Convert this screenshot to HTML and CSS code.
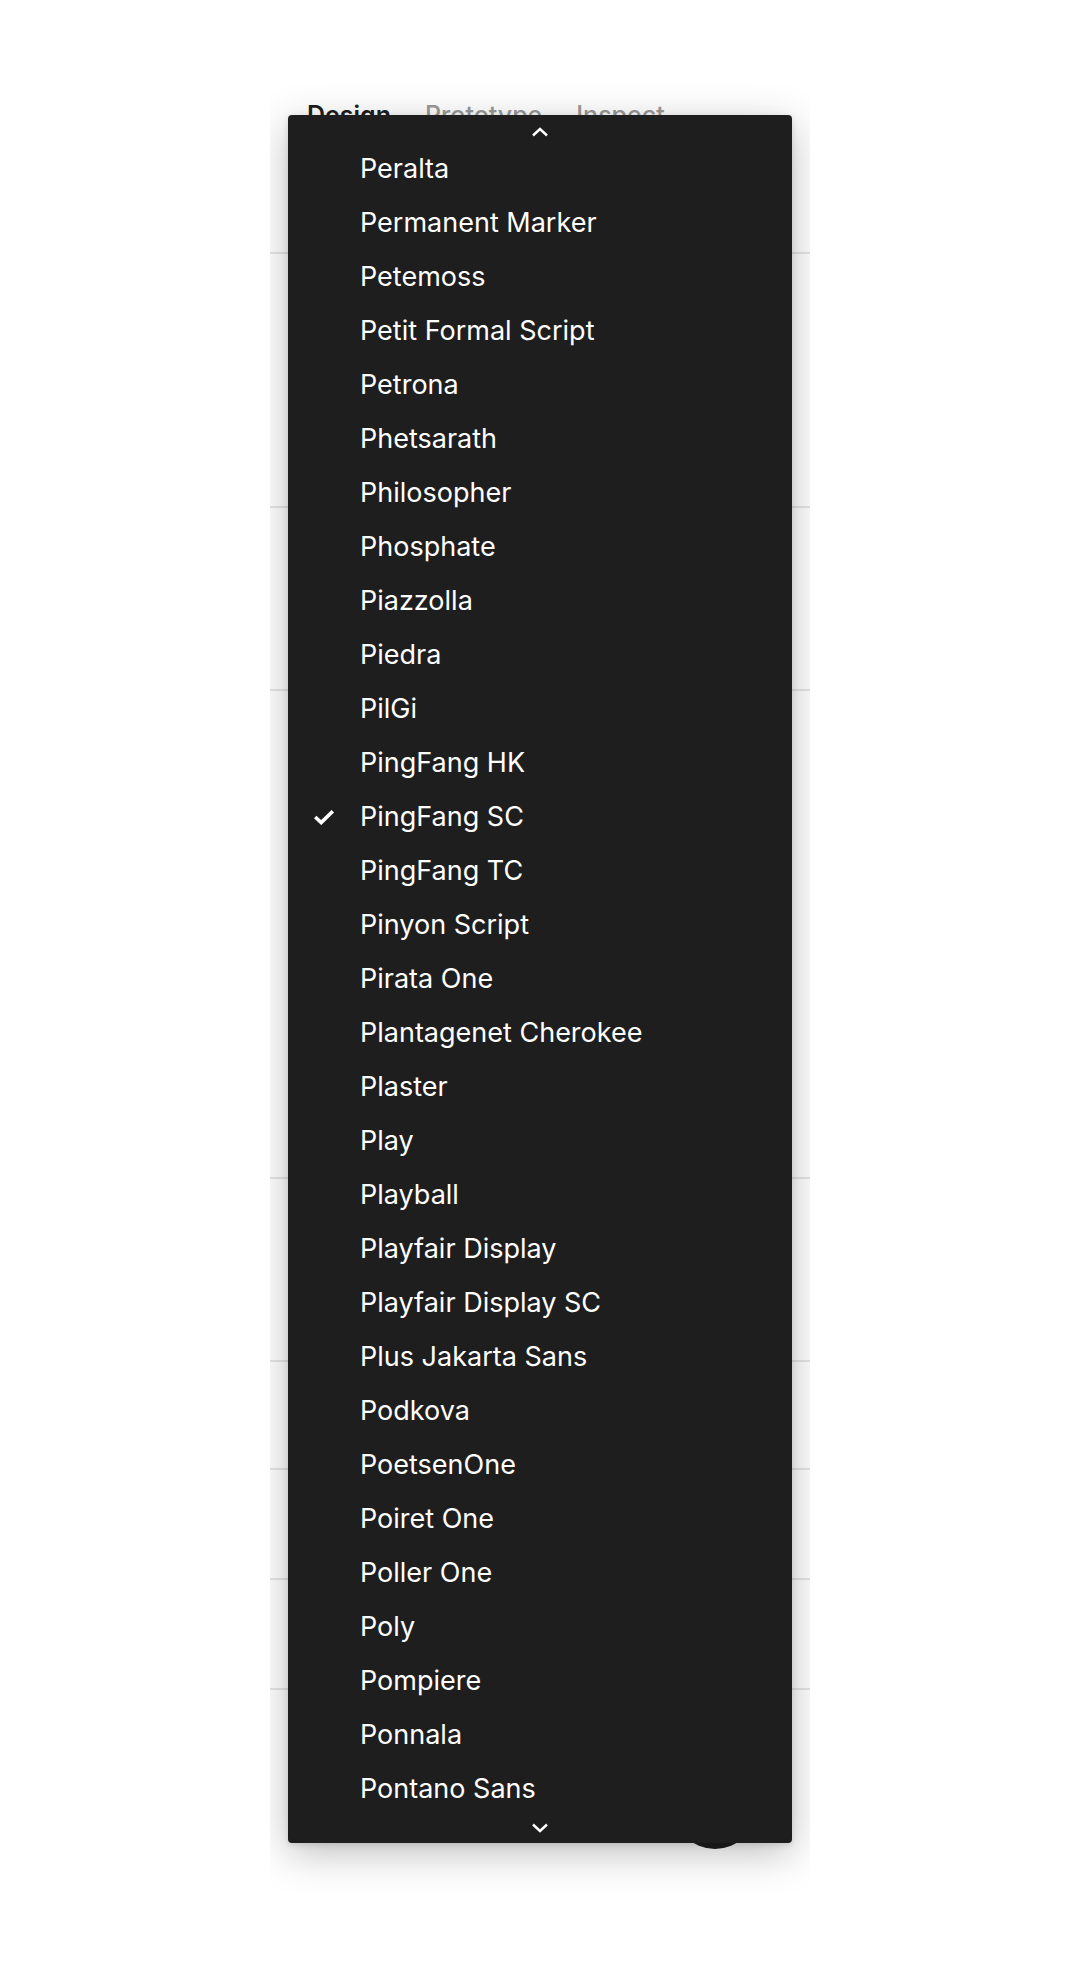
FILE: index.html
```html
<!DOCTYPE html>
<html lang="en">
<head>
<meta charset="utf-8">
<title>Font picker</title>
<link rel="stylesheet" href="styles.css">
</head>
<body>
<div class="panel">
  <div class="section section-tabs">
    <div class="tabs">
      <span class="tab tab-active">Design</span>
      <span class="tab">Prototype</span>
      <span class="tab">Inspect</span>
    </div>
  </div>
  <div class="section section-a"></div>
  <div class="section section-b"></div>
  <div class="section section-c"></div>
  <div class="section section-d"></div>
  <div class="section section-e1"></div>
  <div class="section section-e"></div>
  <div class="section section-e"></div>
  <div class="section section-last"></div>

  <div class="fab"></div>

  <div class="dropdown">
    <div class="scroll-arrow scroll-up">
      <svg width="18" height="10" viewBox="0 0 18 10"><polyline points="2,8.5 9,2 16,8.5" fill="none" stroke="#fff" stroke-width="2.4" stroke-linejoin="miter"/></svg>
    </div>
    <ul class="font-list">
      <li class="font-item"><span class="mark"></span><span class="name">Peralta</span></li>
      <li class="font-item"><span class="mark"></span><span class="name">Permanent Marker</span></li>
      <li class="font-item"><span class="mark"></span><span class="name">Petemoss</span></li>
      <li class="font-item"><span class="mark"></span><span class="name">Petit Formal Script</span></li>
      <li class="font-item"><span class="mark"></span><span class="name">Petrona</span></li>
      <li class="font-item"><span class="mark"></span><span class="name">Phetsarath</span></li>
      <li class="font-item"><span class="mark"></span><span class="name">Philosopher</span></li>
      <li class="font-item"><span class="mark"></span><span class="name">Phosphate</span></li>
      <li class="font-item"><span class="mark"></span><span class="name">Piazzolla</span></li>
      <li class="font-item"><span class="mark"></span><span class="name">Piedra</span></li>
      <li class="font-item"><span class="mark"></span><span class="name">PilGi</span></li>
      <li class="font-item"><span class="mark"></span><span class="name">PingFang HK</span></li>
      <li class="font-item font-item-selected"><span class="mark"><svg width="22" height="16" viewBox="0 0 22 16"><polyline points="2.2,8 8.2,13.6 19.8,2.2" fill="none" stroke="#fff" stroke-width="3.6" stroke-linejoin="miter" stroke-linecap="butt"/></svg></span><span class="name">PingFang SC</span></li>
      <li class="font-item"><span class="mark"></span><span class="name">PingFang TC</span></li>
      <li class="font-item"><span class="mark"></span><span class="name">Pinyon Script</span></li>
      <li class="font-item"><span class="mark"></span><span class="name">Pirata One</span></li>
      <li class="font-item"><span class="mark"></span><span class="name">Plantagenet Cherokee</span></li>
      <li class="font-item"><span class="mark"></span><span class="name">Plaster</span></li>
      <li class="font-item"><span class="mark"></span><span class="name">Play</span></li>
      <li class="font-item"><span class="mark"></span><span class="name">Playball</span></li>
      <li class="font-item"><span class="mark"></span><span class="name">Playfair Display</span></li>
      <li class="font-item"><span class="mark"></span><span class="name">Playfair Display SC</span></li>
      <li class="font-item"><span class="mark"></span><span class="name">Plus Jakarta Sans</span></li>
      <li class="font-item"><span class="mark"></span><span class="name">Podkova</span></li>
      <li class="font-item"><span class="mark"></span><span class="name">PoetsenOne</span></li>
      <li class="font-item"><span class="mark"></span><span class="name">Poiret One</span></li>
      <li class="font-item"><span class="mark"></span><span class="name">Poller One</span></li>
      <li class="font-item"><span class="mark"></span><span class="name">Poly</span></li>
      <li class="font-item"><span class="mark"></span><span class="name">Pompiere</span></li>
      <li class="font-item"><span class="mark"></span><span class="name">Ponnala</span></li>
      <li class="font-item"><span class="mark"></span><span class="name">Pontano Sans</span></li>
    </ul>
    <div class="scroll-arrow scroll-down">
      <svg width="18" height="10" viewBox="0 0 18 10"><polyline points="2,1.5 9,8 16,1.5" fill="none" stroke="#fff" stroke-width="2.4" stroke-linejoin="miter"/></svg>
    </div>
  </div>
</div>
</body>
</html>
```

FILE: styles.css
```css
html, body {
  margin: 0;
  padding: 0;
  background: #ffffff;
}

body {
  font-family: Inter, "Noto Sans", "Liberation Sans", sans-serif;
}

.panel {
  position: relative;
  margin-left: 270px;
  width: 540px;
  height: 1976px;
  overflow: hidden;
  background: #ffffff;
}

.section {
  border-bottom: 2px solid #e6e6e6;
}

.section-tabs {
  height: 254px;
  box-sizing: border-box;
  padding: 101px 0 0 37px;
}

.section-a { height: 252px; }
.section-b { height: 181px; }
.section-c { height: 486px; }
.section-d { height: 181px; }
.section-e1 { height: 106px; }
.section-e { height: 108px; }
.section-last { border-bottom: none; height: 200px; }

.tabs {
  display: flex;
  gap: 34px;
  font-size: 25px;
  line-height: 29px;
}

.tab {
  color: #9a9a9a;
  font-weight: 500;
}

.tab-active {
  color: #1e1e1e;
  font-weight: 600;
}

.fab {
  position: absolute;
  left: 403px;
  top: 1765px;
  width: 84px;
  height: 84px;
  border-radius: 50%;
  background: #1e1e1e;
}

.dropdown {
  position: absolute;
  left: 18px;
  top: 115px;
  width: 504px;
  height: 1728px;
  background: #1e1e1e;
  border-radius: 4px;
  box-shadow: 0 10px 40px rgba(0, 0, 0, 0.26), 0 2px 6px rgba(0, 0, 0, 0.12);
  display: flex;
  flex-direction: column;
}

.scroll-arrow {
  height: 27px;
  display: flex;
  justify-content: center;
}

.scroll-up {
  align-items: flex-end;
}

.scroll-up svg {
  margin-bottom: 5px;
}

.scroll-down {
  align-items: flex-start;
}

.scroll-down svg {
  margin-top: 7px;
}

.scroll-arrow svg {
  display: block;
}

.font-list {
  list-style: none;
  margin: 0;
  padding: 0;
}

.font-item {
  display: flex;
  align-items: center;
  height: 54px;
  color: #ffffff;
  font-size: 27px;
  line-height: 54px;
}

.mark {
  width: 72px;
  flex: none;
  box-sizing: border-box;
  padding-left: 25px;
  display: flex;
  align-items: center;
}

.mark svg {
  display: block;
}

.name {
  white-space: nowrap;
}
```
